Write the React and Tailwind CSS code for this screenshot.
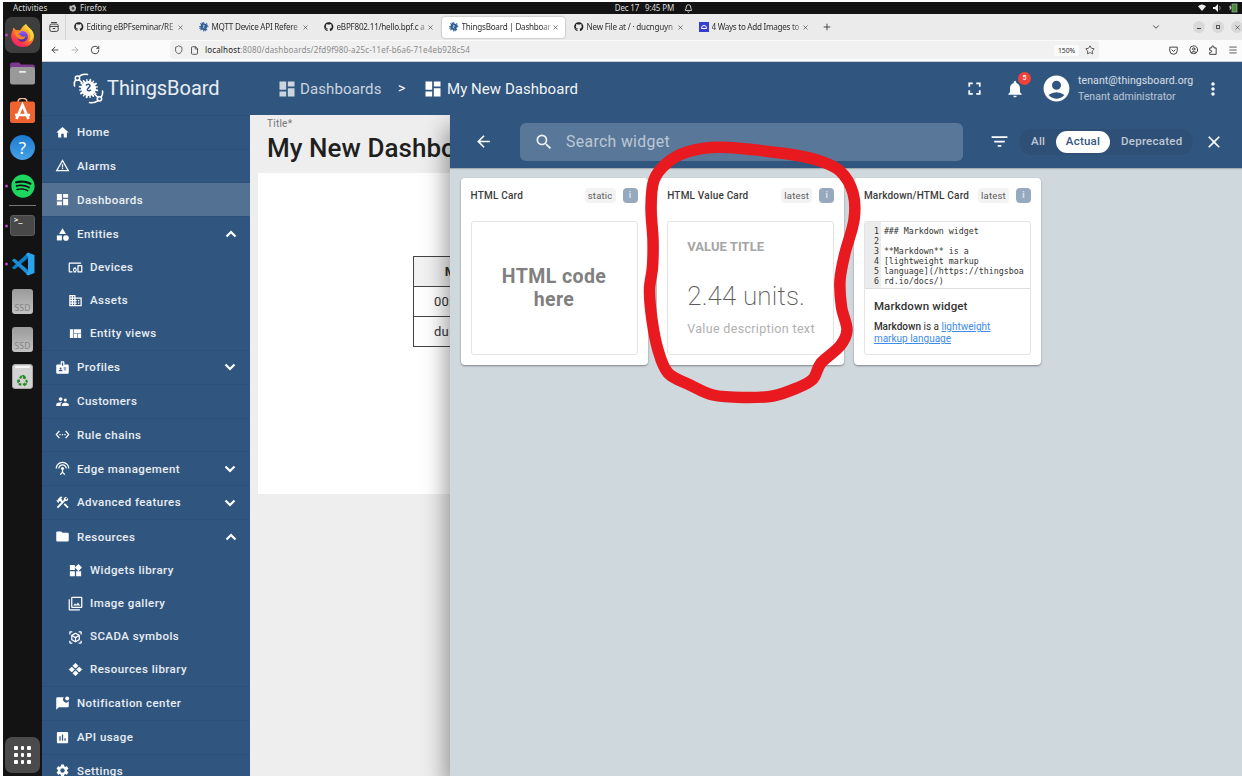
import React from "react";
import {
  MdHome, MdWarningAmber, MdDashboard, MdCategory, MdDevicesOther, MdDomain, MdViewQuilt, MdBadge,
  MdSupervisorAccount, MdSettingsEthernet, MdSettingsInputAntenna, MdConstruction, MdFolder, MdWidgets,
  MdFilter, MdViewInAr, MdInsertChart, MdSettings, MdNotifications, MdFilterList, MdSearch, MdArrowBack,
  MdClose, MdAccountCircle, MdMoreVert, MdFullscreen, MdRecycling,
} from "react-icons/md";
import { FaGithub, FaSpotify } from "react-icons/fa";
import {
  X, Plus, ArrowLeft, ArrowRight, RotateCw, Shield, File, Star, Menu, ChevronDown, Bell, CircleUser,
} from "lucide-react";

const SYS = "font-['Noto_Sans',sans-serif]";

function Gear({ className, hub = "#ececec" }) {
  return (
    <svg viewBox="0 0 20 20" className={className}>
      <g stroke="currentColor" strokeWidth="2.2" strokeLinecap="round">
        <path d="M10 1v18M1 10h18M3.6 3.6l12.8 12.8M16.4 3.6L3.6 16.4M6.6 1.7l6.8 16.6M1.7 13.4l16.6-6.8" />
      </g>
      <circle cx="10" cy="10" r="6.6" fill="currentColor" />
      <path d="M8 6.5l4 1.5-4 3.2 3.6 2" fill="none" stroke={hub} strokeWidth="1.5" />
    </svg>
  );
}

function Logo() {
  return (
    <svg viewBox="0 0 30 30" className="h-[31px] w-[31px] shrink-0 text-white">
      <g fill="none" stroke="currentColor" strokeWidth="1.500" strokeLinecap="round">
        <path d="M1.500 12.500C1 10.500 1.300 8.500 2.500 6.800M6 3.200C8.500 1.200 11 .9 14 1.500" />
        <circle cx="4.300" cy="5" r="2.100" />
        <path d="M28.600 17.500c.3 2.500-.2 4.300-1.300 5.800M24 27c-2.200 1.700-5 2.100-8 1.600" />
        <circle cx="25.600" cy="25" r="2.100" />
        <path d="M5.800 6.600l3 3M21 20.500l3 3" />
      </g>
      <g stroke="currentColor" strokeWidth="1.900" strokeLinecap="round" transform="rotate(12 15 15)">
        <path d="M15 6.300v17.400M6.300 15h17.400M8.900 8.900l12.200 12.200M21.100 8.900L8.900 21.100" />
        <path d="M11.700 7l6.600 16M7 18.300l16-6.600M7 11.700l16 6.600M18.300 7l-6.600 16" strokeWidth="1.300" />
      </g>
      <circle cx="15" cy="15" r="7.200" fill="currentColor" />
      <path d="M12.600 12.200c1.300-2.400 4.600-1.200 3.600.8-.7 1.400-3 2-2.200 3.500.7 1.300 2.600.6 3.200-.4" fill="none" stroke="#305680" strokeWidth="1.500" />
    </svg>
  );
}

function Diamonds({ className }) {
  return (
    <svg viewBox="0 0 24 24" className={className} fill="currentColor" stroke="currentColor" strokeWidth="1.200" strokeLinejoin="round">
      <path d="M12 2l4 4-4 4-4-4zM6 8l4 4-4 4-4-4zM18 8l4 4-4 4-4-4zM12 14l4 4-4 4-4-4z" />
    </svg>
  );
}

function ChatBadge({ className }) {
  return (
    <svg viewBox="0 0 24 24" className={className} fill="currentColor">
      <path d="M22 8.500V16a2 2 0 0 1-2 2H6l-4 4V4a2 2 0 0 1 2-2h10.100A5 5 0 0 0 22 8.500z" />
      <circle cx="19.500" cy="4" r="3.200" />
    </svg>
  );
}

const MENU = [
  { t: "Home", i: MdHome },
  { t: "Alarms", i: MdWarningAmber },
  { t: "Dashboards", i: MdDashboard, on: true },
  { t: "Entities", i: MdCategory, open: true, subs: [
    { t: "Devices", i: MdDevicesOther }, { t: "Assets", i: MdDomain }, { t: "Entity views", i: MdViewQuilt } ] },
  { t: "Profiles", i: MdBadge, closed: true },
  { t: "Customers", i: MdSupervisorAccount },
  { t: "Rule chains", i: MdSettingsEthernet },
  { t: "Edge management", i: MdSettingsInputAntenna, closed: true },
  { t: "Advanced features", i: MdConstruction, closed: true },
  { t: "Resources", i: MdFolder, open: true, subs: [
    { t: "Widgets library", i: MdWidgets }, { t: "Image gallery", i: MdFilter },
    { t: "SCADA symbols", i: MdViewInAr }, { t: "Resources library", i: Diamonds } ] },
  { t: "Notification center", i: ChatBadge },
  { t: "API usage", i: MdInsertChart },
  { t: "Settings", i: MdSettings },
];

function Chevron({ up }) {
  return (
    <svg viewBox="0 0 12 8" className={up ? "ml-auto mr-[13px] h-2 w-3" : "ml-auto mr-[14px] h-2 w-3 rotate-180"}>
      <path d="M1.500 6.500L6 2l4.500 4.500" fill="none" stroke="#fff" strokeWidth="2.200" />
    </svg>
  );
}

function Sidebar() {
  return (
    <nav className="flex w-[208px] shrink-0 flex-col overflow-hidden bg-[#305680] text-white">
      <div className="flex h-[53.700px] shrink-0 items-center border-b border-[#2c5079] pl-[31px]">
        <Logo />
        <span className="ml-[3px] text-[20px] leading-none tracking-[-0.050px] text-white/90">ThingsBoard</span>
      </div>
      {MENU.map((m) => (
        <React.Fragment key={m.t}>
          <div className={"flex h-[33.850px] shrink-0 items-center pl-[13px] " + (m.on ? "bg-[#527193]" : "") + (m.open ? "" : " border-b border-[#2c5079]")}>
            <m.i className="h-[15px] w-[15px]" />
            <span className="ml-[7px] pt-px text-[11.500px] font-medium tracking-[0.450px] text-white/90">{m.t}</span>
            {(m.open || m.closed) && <Chevron up={m.open} />}
          </div>
          {m.subs && m.subs.map((s, k) => (
            <div key={s.t} className={"flex h-[33.250px] shrink-0 items-center pl-[26px] " + (k === m.subs.length - 1 ? "border-b border-[#2c5079]" : "")}>
              <s.i className="h-[15px] w-[15px]" />
              <span className="ml-[7px] text-[11.500px] font-medium tracking-[0.450px] text-white/90">{s.t}</span>
            </div>
          ))}
        </React.Fragment>
      ))}
    </nav>
  );
}

function FirefoxIcon() {
  return (
    <svg viewBox="0 0 28 28" className="h-[25px] w-[25px]">
      <defs>
        <linearGradient id="ffo" x1=".85" y1="0" x2=".2" y2="1">
          <stop offset="0" stopColor="#fff24a" /><stop offset=".4" stopColor="#ff9a1e" />
          <stop offset=".75" stopColor="#ff3b47" /><stop offset="1" stopColor="#e6187d" />
        </linearGradient>
        <linearGradient id="ffp" x1="0" y1="0" x2="0" y2="1"><stop offset="0" stopColor="#9059ff" /><stop offset="1" stopColor="#4b2a9c" /></linearGradient>
      </defs>
      <path d="M18 1c1 3 4 4.500 6 7 5 6 3 13-2 16.500-5 3.500-13 3-17-1C1 19.500 0 14 3 8.500l.7-3.500L7 8l4.500.2C13 5 15 2.500 18 1z" fill="url(#ffo)" />
      <circle cx="14" cy="15" r="6" fill="url(#ffp)" />
      <path d="M5 9c3-1 6-.5 7.500 1.500-2 .3-3.300 1.300-3.500 2.500 2.500-.5 3 2 5 2.300 1.500.2 2.500-.3 3.500-.5C16.500 19 11 19.500 8 16 6.500 14 5.500 12 5 9z" fill="#ff8a22" />
      <path d="M18 1c0 5 5 7 5 14 0 3-1.500 5-3 6 5-1 7-6 6-10-1-4-6-6-8-10z" fill="#ffd43a" />
    </svg>
  );
}

function DockCell({ h, dot, children }) {
  return (
    <div className={"relative flex w-full shrink-0 items-center justify-center " + h}>
      {dot && <i className="absolute left-[1.500px] top-1/2 h-[3px] w-[3px] -translate-y-1/2 rounded-full bg-[#b149b8]" />}
      {children}
    </div>
  );
}

function Ssd() {
  return (
    <div className="flex h-[25px] w-[21px] items-end justify-center rounded-[3px] bg-gradient-to-b from-[#9b9b9b] to-[#c2c2c2] pb-px">
      <span className={"text-[8.500px] leading-[11px] tracking-[0.200px] text-[#858585] " + SYS}>SSD</span>
    </div>
  );
}

function Dock() {
  return (
    <aside className="flex w-[39px] shrink-0 flex-col items-center bg-[#131313] pt-[3px]">
      <DockCell h="h-[36px]" dot>
        <div className="flex h-[36px] w-[35px] items-center justify-center rounded-[7px] bg-[#3e3e3e]"><FirefoxIcon /></div>
      </DockCell>
      <DockCell h="h-[41px]">
        <svg viewBox="0 0 25 23" className="h-[23px] w-[25px]">
          <path d="M0 3a2.500 2.500 0 0 1 2.500-2.500H9l2 2h11.500A2.500 2.500 0 0 1 25 5v6H0z" fill="#7c3a8f" />
          <rect y="5" width="25" height="17.500" rx="2.500" fill="#999" />
          <rect x="9" y="9" width="7" height="1.800" rx=".5" fill="#eee" />
        </svg>
      </DockCell>
      <DockCell h="h-[33px]">
        <svg viewBox="0 0 25 25" className="h-[25px] w-[25px]">
          <path d="M8 4c0-5 9-5 9 0" fill="none" stroke="#f0b89c" strokeWidth="1.500" />
          <rect y="3.500" width="25" height="21.500" rx="2.500" fill="#ed6331" />
          <path d="M6.500 21L12.500 7l6 14M5 17h15" fill="none" stroke="#fff" strokeWidth="2.700" />
        </svg>
      </DockCell>
      <DockCell h="h-[41px]">
        <div className="flex h-[25px] w-[25px] items-center justify-center rounded-full bg-gradient-to-b from-[#1a79cf] to-[#47a2e6]">
          <span className={"text-[17px] leading-none text-white " + SYS}>?</span>
        </div>
      </DockCell>
      <DockCell h="h-[36px]" dot><FaSpotify className="h-[24px] w-[24px] text-[#1ed760]" /></DockCell>
      <div className="mb-[1px] mt-[1px] h-px w-[27px] shrink-0 bg-[#777]" />
      <DockCell h="h-[37px]" dot>
        <div className="h-[21px] w-[25px] rounded-[3px] border border-[#5c5c5c] bg-[#484848] pl-[3px] font-['DejaVu_Sans_Mono',monospace] text-[7px] font-bold leading-[9px] text-white">&gt;_</div>
      </DockCell>
      <DockCell h="h-[39px]" dot>
        <svg viewBox="0 0 24 24" className="h-[24px] w-[24px]">
          <path d="M17 6L3.500 17.500.8 15.800 15.500 2z" fill="#0a7fc9" />
          <path d="M17 18L3.500 6.500.8 8.200 15.500 22z" fill="#1c8fd8" />
          <path d="M17 .5L23.500 3v18L17 23.500l-2-1.500 2-3.500v-13L15 2z" fill="#2ba4ef" />
        </svg>
      </DockCell>
      <DockCell h="h-[37px]"><Ssd /></DockCell>
      <DockCell h="h-[38px]"><Ssd /></DockCell>
      <DockCell h="h-[37px]">
        <div className="flex h-[25px] w-[21px] flex-col items-center rounded-[3px] border border-[#aaa] bg-[#d3d3d3]">
          <i className="mt-px h-[2px] w-[15px] rounded-sm bg-[#f5f5f5]" />
          <MdRecycling className="mt-[6px] h-[13px] w-[13px] text-[#218a1f]" />
        </div>
      </DockCell>
      <div className="mb-[3px] mt-auto grid h-[36px] w-[35px] shrink-0 grid-cols-[3.700px_3.700px_3.700px] content-center justify-center gap-[3px] rounded-[7px] bg-[#4b4b4b]">
        {[...Array(9)].map((_, k) => <i key={k} className="h-[3.700px] w-[3.700px] rounded-[1px] bg-white" />)}
      </div>
    </aside>
  );
}

const TABS = [
  { t: "Editing eBPFseminar/RE", k: "gh", c: "tracking-[-0.200px]" },
  { t: "MQTT Device API Refere", k: "tb", c: "tracking-[-0.240px]" },
  { t: "eBPF802.11/hello.bpf.c a", k: "gh", c: "tracking-[-0.220px]" },
  { t: "ThingsBoard | Dashboar", k: "tb", on: true, c: "tracking-[-0.220px]" },
  { t: "New File at / · ducnguyn", k: "gh", c: "tracking-[-0.200px]" },
  { t: "4 Ways to Add Images to", k: "sq", c: "tracking-[-0.280px]" },
];

function Browser() {
  return (
    <div className={"shrink-0 text-[#2e2e2e] " + SYS}>
      <div className="flex h-[26px] items-center bg-[#ebebeb]">
        <div className="flex h-full w-[24px] items-center justify-center border-r border-[#d4d4d4]">
          <svg viewBox="0 0 12 12" className="h-[10px] w-[10px]" fill="none" stroke="#333" strokeWidth="1.100"><path d="M2.500.6h7" /><rect x="1" y="2.500" width="10" height="8.800" rx="1.800" /><path d="M1 5.300h10M4.500 7.800h3" /></svg>
        </div>
        {TABS.map((t, k) => (
          <div key={t.t} className={"flex h-[21px] items-center rounded-[3px] pl-[7px] " + (k === 0 ? "ml-[1px] " : "") + (t.on ? "w-[123px] mr-[2px] bg-white shadow-[0_0_2px_rgba(0,0,0,.4)]" : "w-[125px]")}>
            {t.k === "gh" && <FaGithub className="h-[9.500px] w-[9.500px] shrink-0 text-[#222]" />}
            {t.k === "tb" && <Gear className="h-[9.500px] w-[9.500px] shrink-0 text-[#2a5b94]" />}
            {t.k === "sq" && <span className="flex h-[9.500px] w-[9.500px] shrink-0 items-center justify-center bg-[#3340cf]"><i className="h-[4px] w-[6px] rounded-t-[3px] border border-white" /></span>}
            <span className={"ml-[3px] w-[90.500px] shrink-0 whitespace-nowrap text-[8.100px] [mask-image:linear-gradient(to_right,#000_88%,#0004_100%)] " + t.c}>{t.t}</span>
            <X className="h-[7px] w-[7px] shrink-0" strokeWidth={2} />
          </div>
        ))}
        <Plus className="ml-[5px] h-[10px] w-[10px]" strokeWidth={2} />
        <ChevronDown className="ml-auto h-[10px] w-[10px]" strokeWidth={2} />
        <div className="-mr-[1px] ml-[32px] flex gap-[7px]">
          <span className="flex h-[12px] w-[12px] items-center justify-center rounded-full bg-[#d9d9d9]"><i className="mt-[3px] h-px w-[4px] bg-[#444]" /></span>
          <span className="flex h-[12px] w-[12px] items-center justify-center rounded-full bg-[#d9d9d9]"><i className="h-[4px] w-[4px] border border-[#555]" /></span>
          <span className="flex h-[12px] w-[12px] items-center justify-center rounded-full bg-[#d9d9d9]"><X className="h-[7px] w-[7px]" /></span>
        </div>
      </div>
      <div className="flex h-[22px] items-center border-b border-[#c9ced4] bg-[#fbfbfb] pl-[8px] pb-px">
        <ArrowLeft className="h-[10px] w-[10px]" strokeWidth={2} />
        <ArrowRight className="ml-[10px] h-[10px] w-[10px] text-[#a5a5a5]" strokeWidth={2} />
        <RotateCw className="ml-[10px] h-[10px] w-[10px]" strokeWidth={2} />
        <div className="ml-[70px] flex h-[18px] w-[929px] items-center rounded-[3px] bg-[#f1f1f1] pl-[4px]">
          <Shield className="h-[9.500px] w-[9.500px]" strokeWidth={1.800} />
          <File className="ml-[6px] h-[9px] w-[9px]" strokeWidth={2} />
          <span className="ml-[6.500px] whitespace-nowrap text-[8px] tracking-[0.160px] text-[#8b8b8b]"><span className="text-[#222]">localhost</span>:8080/dashboards/2fd9f980-a25c-11ef-b6a6-71e4eb928c54</span>
          <span className="ml-auto rounded-[2px] bg-[#fafafa] px-[4px] text-[6.800px] leading-[11px] tracking-[-0.100px]">150%</span>
          <Star className="ml-[6px] mr-[4px] h-[10px] w-[10px]" strokeWidth={1.800} />
        </div>
        <svg viewBox="0 0 12 12" className="ml-auto h-[9px] w-[9px]" fill="none" stroke="#333" strokeWidth="1.200"><path d="M1 1.500h10V6a5 5 0 0 1-10 0zM3.500 5L6 7.200 8.500 5" /></svg>
        <CircleUser className="ml-[11px] h-[9.500px] w-[9.500px]" strokeWidth={2.200} />
        <svg viewBox="0 0 12 12" className="ml-[10px] h-[10px] w-[10px]" fill="none" stroke="#333" strokeWidth="1.100"><path d="M4.500 3.500V2.300a1.300 1.300 0 0 1 2.600 0v1.200h2.700v7.700H2V8.800h1.200a1.200 1.200 0 0 0 0-2.400H2V3.500z" /></svg>
        <Menu className="ml-[10px] mr-[4px] h-[10px] w-[10px]" strokeWidth={1.800} />
      </div>
    </div>
  );
}

function AppHeader() {
  return (
    <header className="flex h-[53px] shrink-0 items-center bg-[#305680] pl-[27px] text-white">
      <MdDashboard className="h-[20px] w-[20px] text-white/75" />
      <span className="ml-[3px] w-[81px] whitespace-nowrap pt-[2px] text-[15px] tracking-[0.120px] text-white/75">Dashboards</span>
      <span className="ml-[17px] w-[10px] text-[14px]">&gt;</span>
      <MdDashboard className="ml-[15px] h-[20px] w-[20px]" />
      <span className="ml-[4px] whitespace-nowrap pt-[2px] text-[15px] tracking-[0.050px] text-white/95">My New Dashboard</span>
      <MdFullscreen className="ml-auto h-[21px] w-[21px]" />
      <div className="relative ml-[20px]">
        <MdNotifications className="h-[20px] w-[20px]" />
        <span className="absolute -top-[7px] left-[13px] flex h-[13px] w-[13px] items-center justify-center rounded-full bg-[#f0423a] text-[7px] font-medium">5</span>
      </div>
      <MdAccountCircle className="ml-[16px] h-[31px] w-[31px]" />
      <div className="ml-[6px] w-[127px] pt-px">
        <div className="whitespace-nowrap text-[10.500px] leading-[16px] tracking-[0.100px] text-white/80">tenant@thingsboard.org</div>
        <div className="whitespace-nowrap text-[10.500px] leading-[16px] tracking-[0.020px] text-white/65">Tenant administrator</div>
      </div>
      <MdMoreVert className="-ml-[2px] mr-[19px] h-[20px] w-[20px]" />
    </header>
  );
}

function Card({ title, tag, children }) {
  return (
    <div className="flex h-[187px] w-[187px] shrink-0 flex-col rounded-[4px] bg-white px-[10px] shadow-[0_1px_2px_rgba(0,0,0,.4)]">
      <div className="flex h-[33px] items-center pt-[2px]">
        <span className="-mt-[1px] whitespace-nowrap text-[10px] font-medium tracking-[0.200px] text-[#3c3c3c]">{title}</span>
        <span className="ml-auto h-[15px] rounded-[4px] bg-[#f3f3f3] px-[3px] text-[9.500px] leading-[15px] tracking-[0.200px] text-[#5c5c5c]">{tag}</span>
        <span className="ml-[7px] flex h-[15px] w-[15px] items-center justify-center rounded-[4px] bg-[#97a9be] text-[9px] font-bold text-[#dde5ed]">i</span>
      </div>
      <div className="mt-[10px] h-[134px] overflow-hidden rounded-[3px] border border-[#e4e4e4]">{children}</div>
    </div>
  );
}

const CODE = ["### Markdown widget", "", "**Markdown** is a", "[lightweight markup", "language](/https://thingsboa", "rd.io/docs/)"];

function WidgetPanel() {
  return (
    <section className="absolute bottom-0 right-0 top-[53px] flex w-[792px] flex-col bg-[#cfd8dc] shadow-[-4px_12px_22px_rgba(0,0,0,.4)] [clip-path:inset(0_0_0_-40px)]">
      <div className="flex h-[53px] shrink-0 items-center bg-[#305680] pl-[24px] text-white shadow-[0_1px_1px_rgba(0,0,0,.2)]">
        <MdArrowBack className="h-[19px] w-[19px]" />
        <div className="ml-[27px] flex h-[38px] w-[443px] items-center rounded-[6px] bg-[#597899] pl-[14px]">
          <MdSearch className="h-[20px] w-[20px] text-white/90" />
          <span className="ml-[12px] pt-px text-[15.800px] tracking-[0.350px] text-white/60">Search widget</span>
        </div>
        <MdFilterList className="ml-[26px] h-[21px] w-[21px]" />
        <div className="ml-[9px] flex h-[26px] w-[174px] items-center rounded-[13px] bg-[#2e4f76] pt-px text-[11.500px] font-medium tracking-[0.250px] text-white/70">
          <span className="w-[37px] pl-[12px]">All</span>
          <span className="flex h-[22px] w-[54px] items-center justify-center rounded-[11px] bg-white text-[#305680]">Actual</span>
          <span className="ml-[11px]">Deprecated</span>
        </div>
        <MdClose className="ml-[11px] h-[20px] w-[20px]" />
      </div>
      <div className="flex gap-[9.700px] pl-[10.500px] pt-[10px]">
        <Card title="HTML Card" tag="static">
          <div className="flex h-full items-center justify-center text-center text-[19.500px] font-bold leading-[23px] tracking-[0.420px] text-[#808080]">HTML code<br />here</div>
        </Card>
        <Card title="HTML Value Card" tag="latest">
          <div className="whitespace-nowrap pl-[19px] text-[#a5a5a5]">
            <div className="pt-[16px] text-[13px] font-bold leading-[18px] tracking-[0.050px]">VALUE TITLE</div>
            <div className="mt-[24px] text-[26px] font-extralight leading-[32px] tracking-[0.150px] text-[#5a5a5a]">2.44 units.</div>
            <div className="mt-[8px] text-[12.500px] leading-[18px] tracking-[0.330px] text-[#b0b0b0]">Value description text</div>
          </div>
        </Card>
        <Card title="Markdown/HTML Card" tag="latest">
          <div className="flex h-[67px] border-b border-[#dedede] font-['DejaVu_Sans_Mono',monospace] text-[8.300px] leading-[10px] text-[#333]">
            <div className="w-[16px] bg-[#ececec] pr-[2px] pt-[4px] text-right">{CODE.map((_, k) => <div key={k}>{k + 1}</div>)}</div>
            <div className="whitespace-pre pl-[3px] pt-[4px]">{CODE.map((l, k) => <div key={k} className="h-[10px]">{l}</div>)}</div>
          </div>
          <div className="pl-[9px] text-[#333]">
            <div className="pt-[9px] text-[11.500px] font-medium leading-[17px] tracking-[0.150px]">Markdown widget</div>
            <div className="mt-[6px] whitespace-nowrap text-[10px] leading-[12px]"><b className="font-medium">Markdown</b> is a <span className="text-[#3d8bea] underline">lightweight<br />markup language</span></div>
          </div>
        </Card>
      </div>
    </section>
  );
}

const LOOP = [
  [720, 147.300], [783, 153.300], [817, 160], [840, 171], [853, 193], [854, 220], [845, 253], [840, 280], [841.500, 307], [847, 330],
  [840, 346], [821, 363], [813, 379], [797, 388], [773, 396], [743, 397.500], [713, 395], [690, 385], [668, 373], [658, 350],
  [652, 320], [649.500, 290], [652.500, 267], [653, 240], [651, 207], [654, 180], [667, 163], [687, 152],
];

function smooth(p) {
  const n = p.length;
  let d = `M${p[0]}`;
  for (let i = 0; i < n; i++) {
    const [a, b, c, e] = [p[(i + n - 1) % n], p[i], p[(i + 1) % n], p[(i + 2) % n]];
    d += `C${b[0] + (c[0] - a[0]) / 6},${b[1] + (c[1] - a[1]) / 6} ${c[0] - (e[0] - b[0]) / 6},${c[1] - (e[1] - b[1]) / 6} ${c[0]},${c[1]}`;
  }
  return d + "Z";
}

export default function App() {
  return (
    <div className="relative flex h-[778px] w-[1242px] flex-col overflow-hidden bg-white pb-[2px] pl-[3px] pt-[2px] font-['Roboto',sans-serif]">
      <div className={"relative flex h-[12px] shrink-0 items-center bg-[#131313] text-[8px] leading-none text-[#ddd] " + SYS}>
        <span className="ml-[10px] w-[56px] tracking-[0.100px]">Activities</span>
        <svg viewBox="0 0 10 10" className="h-[8px] w-[8px]"><path d="M1 2l2 .5L6.500.5 9 4.500 8 8.500 5 9.700 1.500 8.500.3 5z" fill="#bbb" /><circle cx="5" cy="5.500" r="1.600" fill="#444" /></svg>
        <span className="ml-[3px] tracking-[0.150px]">Firefox</span>
        <span className="ml-auto mr-[10px] whitespace-pre tracking-[-0.150px]">Dec 17   9:45 PM</span>
        <Bell className="mr-[507px] h-[9px] w-[9px]" strokeWidth={2.500} />
        <svg viewBox="0 0 42 12" className="h-[12px] w-[42px] -translate-x-[2px]">
          <path d="M0 4.300Q4 .8 8 4.300L4 9z" fill="#eee" />
          <path d="M15 5h2l3-3v8l-3-3h-2z" fill="#eee" /><path d="M21.500 4q1.500 2 0 4" fill="none" stroke="#999" strokeWidth=".8" />
          <path d="M31 5l2-2-.5 2.500H34L31.500 8.500 32 6z" fill="#ddd" />
          <rect x="34" y="2" width="5" height="8" fill="#3f9129" stroke="#aaa" strokeWidth=".7" />
        </svg>
      </div>
      <div className="flex min-h-0 flex-1">
        <Dock />
        <div className="flex min-w-0 flex-1 flex-col">
          <Browser />
          <div className="flex min-h-0 flex-1">
            <Sidebar />
            <div className="relative flex min-w-0 flex-1 flex-col overflow-hidden bg-[#eee]">
              <AppHeader />
              <div className="whitespace-nowrap pl-[17px] pt-[2px]">
                <div className="text-[10px] leading-[14px] tracking-[0.250px] text-[#757575]">Title*</div>
                <div className="text-[26px] font-medium leading-[34px] tracking-[0.050px] text-[#1f1f1f]">My New Dashboard</div>
              </div>
              <div className="ml-[8px] mt-[8px] h-[321px] bg-white pl-[155px] pt-[83px]">
                <table className="w-[240px] border-collapse text-center text-[13px] tracking-[0.250px] text-[#333] [&_td]:border [&_td]:border-[#444] [&_td]:pt-px [&_th]:border [&_th]:border-[#444] [&_th]:pt-px">
                  <tbody>
                    <tr className="h-[30px] bg-[#f2f2f2]"><th className="w-[92px] font-bold">MAC</th><th>Value</th></tr>
                    <tr className="h-[30px]"><td className="pl-[20px] text-left">00:00:00</td><td>0</td></tr>
                    <tr className="h-[30px]"><td className="pl-[20px] text-left">du</td><td>0</td></tr>
                  </tbody>
                </table>
              </div>
              <WidgetPanel />
            </div>
          </div>
        </div>
      </div>
      <svg viewBox="0 0 1242 778" className="pointer-events-none absolute left-0 top-0 h-[778px] w-[1242px]">
        <path d={smooth(LOOP)} fill="none" stroke="#e8191f" strokeWidth="11.500" strokeLinejoin="round" />
      </svg>
    </div>
  );
}
